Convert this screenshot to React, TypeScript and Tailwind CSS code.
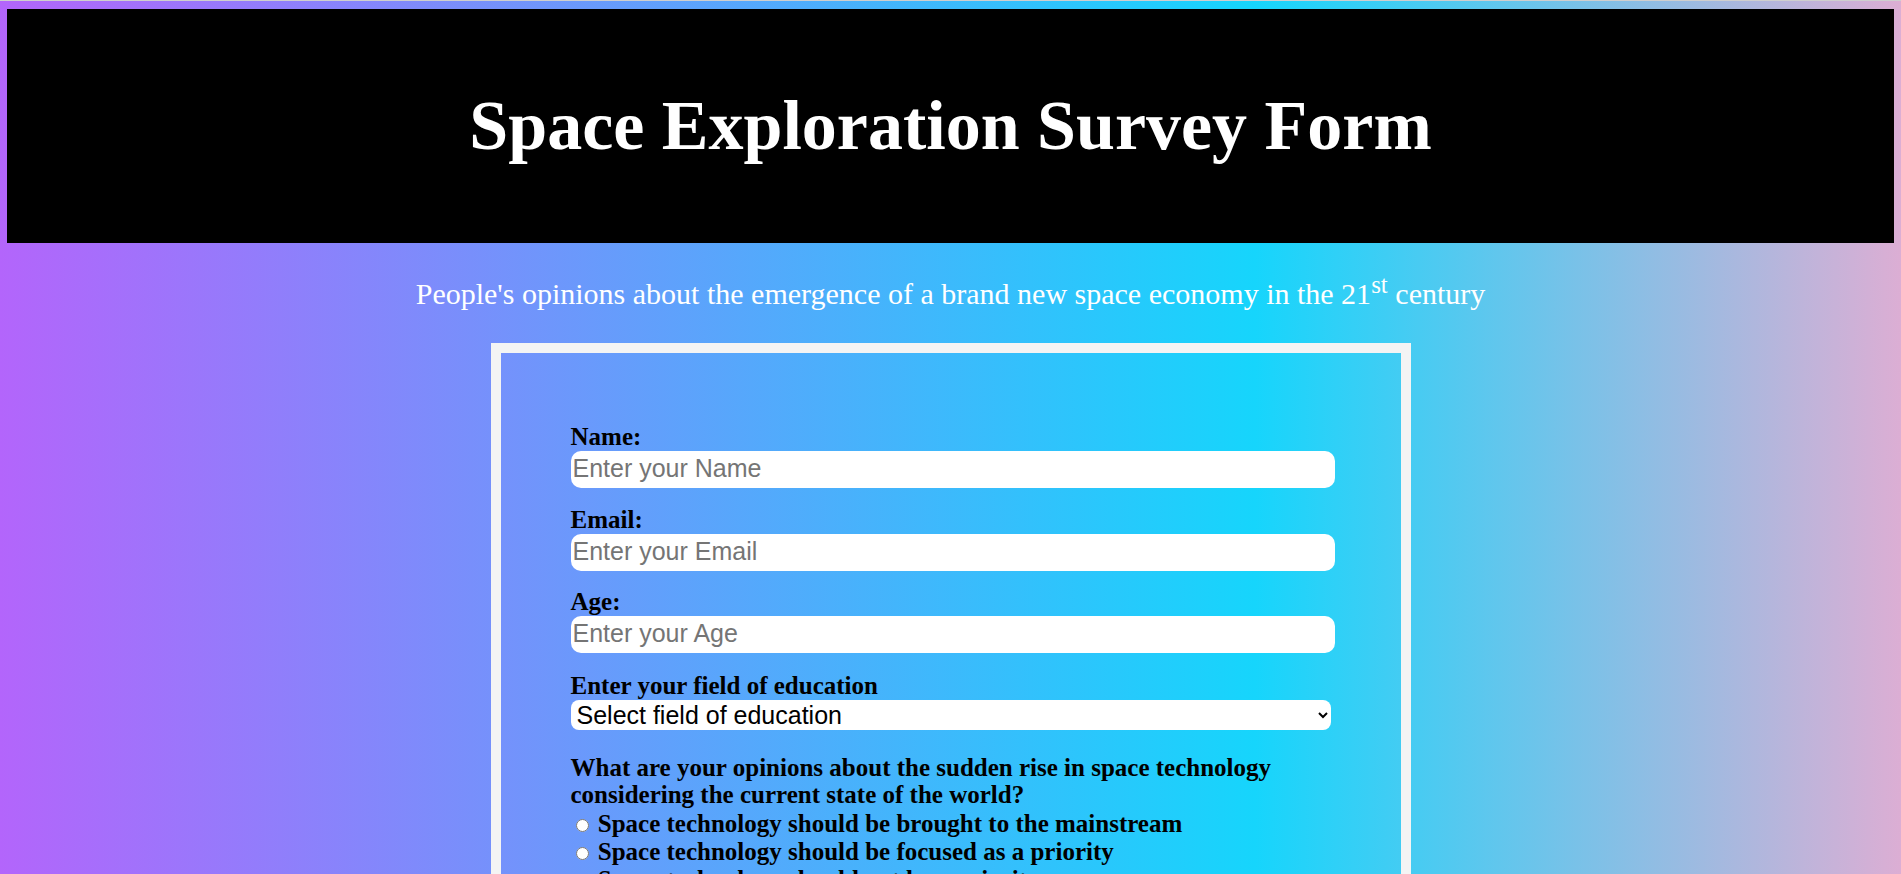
import React from "react";

const serif = { fontFamily: '"Liberation Serif", "Times New Roman", serif' };

export default function App() {
  return (
    <div
      style={serif}
      className="min-h-screen w-full border-t border-[#cfcfcf] bg-[linear-gradient(to_right,#b365fb_0%,#16d5fc_66%,#dcaed4_100%)] px-[7px] pt-[8px] pb-[40px] text-black"
    >
      <header className="flex h-[234px] items-center justify-center bg-black">
        <h1 className="text-[70px] font-bold leading-[80px] text-white">
          Space Exploration Survey Form
        </h1>
      </header>

      <p className="mt-[34px] text-center text-[30px] leading-[34.5px] text-white">
        People's opinions about the emergence of a brand new space economy in the 21
        <sup className="relative -top-[11px] align-baseline text-[25px] leading-none">st</sup> century
      </p>

      <form className="mx-auto mt-[31px] w-[920px] border-[10px] border-[#f4f4f4] pt-[69px] pr-[66px] pb-[60px] pl-[70px]">
        <div>
          <label htmlFor="name" className="block text-[25px] font-bold leading-[29px]">
            Name:
          </label>
          <input
            id="name"
            type="text"
            placeholder="Enter your Name"
            className="block h-[37px] w-[764px] rounded-[10px] bg-white px-[2px] font-['Liberation_Sans',Arial,sans-serif] text-[25px] text-black placeholder:text-[#757575]"
          />
        </div>

        <div className="mt-[17px]">
          <label htmlFor="email" className="block text-[25px] font-bold leading-[29px]">
            Email:
          </label>
          <input
            id="email"
            type="email"
            placeholder="Enter your Email"
            className="block h-[37px] w-[764px] rounded-[10px] bg-white px-[2px] font-['Liberation_Sans',Arial,sans-serif] text-[25px] text-black placeholder:text-[#757575]"
          />
        </div>

        <div className="mt-[16px]">
          <label htmlFor="age" className="block text-[25px] font-bold leading-[29px]">
            Age:
          </label>
          <input
            id="age"
            type="number"
            placeholder="Enter your Age"
            className="block h-[37px] w-[764px] rounded-[10px] bg-white px-[2px] font-['Liberation_Sans',Arial,sans-serif] text-[25px] text-black placeholder:text-[#757575]"
          />
        </div>

        <div className="mt-[19px]">
          <label htmlFor="edu" className="block text-[25px] font-bold leading-[28px]">
            Enter your field of education
          </label>
          <select
            id="edu"
            defaultValue=""
            className="block h-[30px] w-[760px] rounded-[8px] bg-white pl-[2px] font-['Liberation_Sans',Arial,sans-serif] text-[25px] leading-[28px] text-black"
          >
            <option value="">Select field of education</option>
            <option value="science">Science</option>
            <option value="engineering">Engineering</option>
            <option value="arts">Arts</option>
            <option value="commerce">Commerce</option>
            <option value="other">Other</option>
          </select>
        </div>

        <div className="mt-[24px] text-[25px] font-bold leading-[27.8px]">
          <p>
            What are your opinions about the sudden rise in space technology considering the
            current state of the world?
          </p>
          <label className="mt-[1px] block">
            <input type="radio" name="opinion" className="mt-[3px] mr-[3px] ml-[5px]" />{" "}
            Space technology should be brought to the mainstream
          </label>
          <label className="block">
            <input type="radio" name="opinion" className="mt-[3px] mr-[3px] ml-[5px]" />{" "}
            Space technology should be focused as a priority
          </label>
          <label className="block">
            <input type="radio" name="opinion" className="mt-[3px] mr-[3px] ml-[5px]" />{" "}
            Space technology should not be a priority
          </label>
        </div>

        <div className="mt-[24px] text-[25px] font-bold leading-[27.8px]">
          <p>Would you like to travel to space one day?</p>
          <label className="block">
            <input type="checkbox" className="mt-[3px] mr-[3px] ml-[5px]" /> Yes
          </label>
          <label className="block">
            <input type="checkbox" className="mt-[3px] mr-[3px] ml-[5px]" /> No
          </label>
        </div>

        <div className="mt-[24px]">
          <label className="block text-[25px] font-bold leading-[29px]">Any comments?</label>
          <textarea className="block h-[120px] w-[764px] rounded-[10px] bg-white px-[2px] font-['Liberation_Sans',Arial,sans-serif] text-[20px]" />
        </div>

        <button
          type="submit"
          className="mt-[24px] rounded-[10px] bg-white px-[16px] py-[4px] font-['Liberation_Sans',Arial,sans-serif] text-[25px]"
        >
          Submit
        </button>
      </form>
    </div>
  );
}
